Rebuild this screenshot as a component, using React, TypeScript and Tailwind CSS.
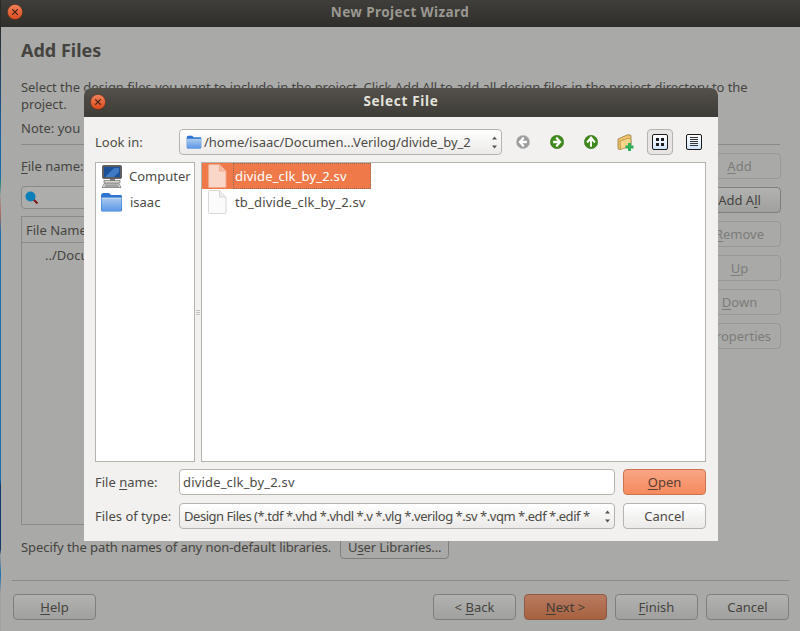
import React from "react";

function U({ children }: { children: React.ReactNode }) {
  return <span className="underline underline-offset-2 decoration-1">{children}</span>;
}

function WBtn({ children, kind = "normal", className = "" }: { children: React.ReactNode; kind?: "normal" | "disabled" | "default"; className?: string }) {
  const k =
    kind === "default"
      ? "border-[#8a5a45] bg-gradient-to-b from-[#b87a60] to-[#a7623f] text-[#3f3a36]"
      : kind === "disabled"
        ? "border-[#989896] bg-[#a9a9a7] text-[#7c7c7a]"
        : "border-[#7f7f7d] bg-gradient-to-b from-[#b2b2b0] to-[#a0a09e] text-[#45443f]";
  return <div className={`h-[26px] w-[83px] flex items-center justify-center rounded-[4px] border ${k} ${className}`}>{children}</div>;
}

function DBtn({ children, primary = false }: { children: React.ReactNode; primary?: boolean }) {
  return (
    <div
      className={`h-[26px] w-[83px] flex items-center justify-center rounded-[4px] border ${
        primary
          ? "border-[#c9744f] bg-gradient-to-b from-[#f9a585] to-[#f58a5e] text-[#5a3d30]"
          : "border-[#b5b3ad] bg-gradient-to-b from-white to-[#ebeae8] text-[#4c4b46]"
      }`}
    >
      {children}
    </div>
  );
}

function CloseBtn({ size = 16 }: { size?: number }) {
  return (
    <svg width={size} height={size} viewBox="0 0 16 16" className="shrink-0">
      <defs>
        <linearGradient id="cb" x1="0" y1="0" x2="0" y2="1">
          <stop offset="0" stopColor="#f2825a" />
          <stop offset="1" stopColor="#d9491c" />
        </linearGradient>
      </defs>
      <circle cx="8" cy="8" r="7.6" fill="url(#cb)" stroke="#4a2a1a" strokeWidth="0.5" />
      <path d="M5.6 5.6l4.8 4.8M10.4 5.6l-4.8 4.8" stroke="#4a2414" strokeWidth="1.3" strokeLinecap="round" />
    </svg>
  );
}

function FolderIcon({ w = 16, h = 14 }: { w?: number; h?: number }) {
  return (
    <svg width={w} height={h} viewBox="0 0 23 20" className="shrink-0">
      <defs>
        <linearGradient id="fd" x1="0" y1="0" x2="0" y2="1">
          <stop offset="0" stopColor="#a9c9f0" />
          <stop offset="1" stopColor="#5b98e6" />
        </linearGradient>
      </defs>
      <path d="M1 3.5 Q1 1 3 1 H9 L11 3 H21 Q22 3 22 4.5 V18 Q22 19.5 20.5 19.5 H2.5 Q1 19.5 1 18Z" fill="#2f74cf" />
      <path d="M1.5 6 H21.5 V17.8 Q21.5 19 20 19 H3 Q1.5 19 1.5 17.8Z" fill="url(#fd)" />
      <path d="M1.5 6 H21.5" stroke="#dbe9fb" strokeWidth="0.8" />
    </svg>
  );
}

function ComputerIcon() {
  return (
    <svg width="22" height="23" viewBox="0 0 22 23" className="shrink-0">
      <rect x="1.5" y="0.5" width="19" height="13" rx="1" fill="#5a5e60" stroke="#2c2e30" strokeWidth="0.6" />
      <rect x="3" y="2" width="16" height="10" fill="#1d4f96" />
      <path d="M5 11 L13 3 H18 V7 L13 12 H5Z" fill="#3f79c4" />
      <rect x="9" y="14" width="5" height="2" fill="#777" />
      <rect x="3" y="15.5" width="16" height="2.5" fill="#d8d8d6" stroke="#444" strokeWidth="0.5" />
      <path d="M1 22.5 L3 18.8 H18 L20 22.5Z" fill="#e6e6e4" stroke="#333" strokeWidth="0.5" />
      <path d="M4 20.2 H17 M3.4 21.3 H18" stroke="#555" strokeWidth="0.6" />
    </svg>
  );
}

function FileIcon({ selected = false }: { selected?: boolean }) {
  return (
    <svg width="20" height="24" viewBox="0 0 20 24" className="shrink-0">
      <path
        d="M1.5 1.5 a1 1 0 0 1 1 -1 H12.5 L19 7 V22.5 a1 1 0 0 1 -1 1 H2.5 a1 1 0 0 1 -1 -1Z"
        fill={selected ? "#f9d6c8" : "#fbfbfb"}
        stroke={selected ? "#f3a78a" : "#d8d8d6"}
      />
      <path d="M12.5 0.5 V7 H19" fill={selected ? "#f5bda6" : "#ececea"} stroke={selected ? "#f3a78a" : "#d8d8d6"} />
    </svg>
  );
}

function ArrowCircle({ dir, color, light }: { dir: "left" | "right" | "up"; color: string; light: string }) {
  const d =
    dir === "left"
      ? "M10 3 L5 8 L10 13 M5.5 8 H14"
      : dir === "right"
        ? "M8 3 L13 8 L8 13 M12.5 8 H4"
        : "M4 8.5 L9 3 L14 8.5 M9 4 V13.5";
  return (
    <svg width="14" height="14" viewBox="0 0 18 16" className="shrink-0 w-[14px] h-[14px]" preserveAspectRatio="none">
      <ellipse cx="9" cy="8" rx="8.6" ry="7.6" fill={color} stroke={light} strokeWidth="0.6" />
      <path d={d} fill="none" stroke="#fff" strokeWidth="2.6" />
    </svg>
  );
}

function NewFolderIcon() {
  return (
    <svg width="17" height="17" viewBox="0 0 17 17" className="shrink-0">
      <path d="M1 5 L10 1 Q13 0.5 14 1.5 V11 L2.5 15.5 Q1 15.5 1 14Z" fill="#f0c469" stroke="#8a6a2c" strokeWidth="0.7" />
      <path d="M3 7 L12 4 L14 6 V12 L3.5 15.5Z" fill="#f7d48a" stroke="#a07c35" strokeWidth="0.6" />
      <rect x="11" y="9" width="3" height="8" fill="#2fae5a" />
      <rect x="8.5" y="11.5" width="8" height="3" fill="#2fae5a" />
    </svg>
  );
}

function ViewIcon({ kind }: { kind: "grid" | "list" }) {
  return (
    <svg width="16" height="16" viewBox="0 0 16 16" className="shrink-0">
      <defs>
        <linearGradient id="vi" x1="0" y1="0" x2="0" y2="1">
          <stop offset="0" stopColor="#ffffff" />
          <stop offset="1" stopColor="#cfe3fb" />
        </linearGradient>
      </defs>
      <rect x="0.5" y="0.5" width="15" height="15" rx="1.5" fill="url(#vi)" stroke="#1a1a1a" />
      {kind === "grid" ? (
        <path d="M4 4h3v3H4zM9 4h3v3H9zM4 9h3v3H4zM9 9h3v3H9z" fill="#1c1c1c" />
      ) : (
        <path d="M4 3.5h8M4 5.5h8M4 7.5h8M4 9.5h8M4 11.5h8" stroke="#333" strokeWidth="1" />
      )}
    </svg>
  );
}

function Spinner() {
  return (
    <svg width="7" height="15" viewBox="0 0 7 15" className="shrink-0">
      <path d="M3.5 1.5 L6 4.5 H1Z M3.5 13.5 L1 10.5 H6Z" fill="#55544f" />
    </svg>
  );
}

function SearchIcon() {
  return (
    <svg width="14" height="14" viewBox="0 0 14 14" className="shrink-0">
      <path d="M7.5 7.5 L12.5 12.5" stroke="#7a1010" strokeWidth="1.8" />
      <circle cx="5.5" cy="5.5" r="5" fill="#0a7fb8" />
    </svg>
  );
}

function Dialog() {
  return (
    <div className="absolute left-[84px] top-[88px] w-[634px] h-[453px] flex flex-col bg-[#f2f1f0] rounded-t-[7px] overflow-hidden text-[#4c4b46]">
      <div className="h-[29px] shrink-0 relative flex items-center justify-center pb-[3px] bg-gradient-to-b from-[#54504a] to-[#3e3c38]">
        <div className="absolute left-[6px] top-[6px]">
          <CloseBtn />
        </div>
        <span className="font-bold text-[#e4e2dc] text-[13.5px] tracking-[0.7px]">Select File</span>
      </div>
      <div className="flex-1 flex flex-col px-[11px] pt-[12px]">
        <div className="flex items-center h-[26px]">
          <span className="w-[84px] shrink-0">Look in:</span>
          <div className="w-[323px] h-[26px] shrink-0 rounded-[4px] border border-[#b5b3ad] bg-gradient-to-b from-white to-[#ebeae8] flex items-center pl-[6px] pr-[3px]">
            <FolderIcon />
            <span className="ml-[2px] flex-1 whitespace-nowrap">/home/isaac/Documen...Verilog/divide_by_2</span>
            <Spinner />
          </div>
          <div className="ml-[14px] flex items-center">
            <ArrowCircle dir="left" color="#9c9c9c" light="#c8c8c8" />
            <div className="ml-[20px]"><ArrowCircle dir="right" color="#3f8a1c" light="#2c6b10" /></div>
            <div className="ml-[20px]"><ArrowCircle dir="up" color="#3f8a1c" light="#2c6b10" /></div>
            <div className="ml-[19px]"><NewFolderIcon /></div>
            <div className="ml-[13px] w-[26px] h-[26px] rounded-[4px] border border-[#b5b3ad] bg-[#e6e5e3] flex items-center justify-center"><ViewIcon kind="grid" /></div>
            <div className="ml-[13px]"><ViewIcon kind="list" /></div>
          </div>
        </div>
        <div className="flex mt-[7px] h-[300px]">
          <div className="w-[100px] shrink-0 bg-white border border-[#b5b3ad] pl-[5px]">
            <div className="flex items-center h-[26px] gap-[6px]">
              <ComputerIcon />
              <span className="whitespace-nowrap">Computer</span>
            </div>
            <div className="flex items-center h-[26px] gap-[6px] ml-[-1px]">
              <FolderIcon w={23} h={20} />
              <span className="ml-px">isaac</span>
            </div>
          </div>
          <div className="w-[6px] shrink-0 flex flex-col items-center justify-center gap-[1px]">
            <div className="w-[4px] h-px bg-[#c4c3c0]" />
            <div className="w-[4px] h-px bg-[#c4c3c0]" />
            <div className="w-[4px] h-px bg-[#c4c3c0]" />
          </div>
          <div className="flex-1 bg-white border border-[#b5b3ad] mr-px tracking-[0.17px]">
            <div className="w-[169px] h-[26px] bg-[#f0794a] flex items-center text-white">
              <div className="w-[31px] flex justify-center shrink-0 ml-[-1px] mr-[1px]"><FileIcon selected /></div>
              <span className="h-full flex-1 flex items-center border border-dotted border-[#8f6a58] pl-[1px] whitespace-nowrap">divide_clk_by_2.sv</span>
            </div>
            <div className="flex items-center h-[26px]">
              <div className="w-[31px] flex justify-center shrink-0 ml-[-1px] mr-[3px]"><FileIcon /></div>
              <span>tb_divide_clk_by_2.sv</span>
            </div>
          </div>
        </div>
        <div className="flex items-center mt-[7px] h-[26px]">
          <span className="w-[84px] shrink-0">File <U>n</U>ame:</span>
          <div className="w-[436px] h-[26px] shrink-0 rounded-[4px] border border-[#b5b3ad] bg-white flex items-center pl-[3px] tracking-[0.17px]">divide_clk_by_2.sv</div>
          <div className="ml-[8px]"><DBtn primary><span><U>O</U>pen</span></DBtn></div>
        </div>
        <div className="flex items-center mt-[8px] h-[26px]">
          <span className="w-[84px] shrink-0">Files of type:</span>
          <div className="w-[436px] h-[26px] shrink-0 rounded-[4px] border border-[#b5b3ad] bg-gradient-to-b from-white to-[#ebeae8] flex items-center pl-[4px] pr-[3px]">
            <span className="flex-1 whitespace-nowrap tracking-[-0.47px]">Design Files (*.tdf *.vhd *.vhdl *.v *.vlg *.verilog *.sv *.vqm *.edf *.edif *</span>
            <Spinner />
          </div>
          <div className="ml-[8px]"><DBtn>Cancel</DBtn></div>
        </div>
      </div>
    </div>
  );
}

export default function App() {
  return (
    <div className="w-[800px] h-[631px] relative flex overflow-hidden font-['Noto_Sans','Open_Sans',sans-serif] text-[13px] leading-[16px] bg-[#a9a9a7]">
      <div className="w-px shrink-0 bg-[linear-gradient(to_bottom,#2b2a27_0%,#2b2a27_4%,#1b5f9f_20%,#1b6fb0_28%,#2a8a7a_29%,#a0a09e_31%,#b06a60_34%,#1b6fb0_37%,#1b6fb0_76%,#123a6a_77%,#123a6a_87%,#a0a09e_88%,#1b6fb0_91%,#a0a09e_94%)]" />
      <div className="w-[799px] min-w-0 flex flex-col text-[#45443f]">
        <div className="h-[27px] shrink-0 relative flex items-center justify-center pb-[3px] bg-gradient-to-b from-[#403e3a] to-[#2f2e2a]">
          <div className="absolute left-[6px] top-[4px]">
            <CloseBtn />
          </div>
          <span className="font-bold text-[#9a9890] text-[13.5px] tracking-[0.42px] ml-[-1px]">New Project Wizard</span>
        </div>
        <div className="flex-1 min-h-0 flex flex-col pl-[20px] pr-[20px]">
          <div className="mt-[12px] h-[22px] font-bold text-[18px] leading-[22px]">Add Files</div>
          <p className="mt-[18px] w-[740px] leading-[17px] tracking-[-0.06px]">Select the design files you want to include in the project. Click Add All to add all design files in the project directory to the project.</p>
          <p className="mt-[7px]">Note: you can always add design files to the project later.</p>
          <div className="mt-[8px] h-px bg-[#8a8a88]" />
          <div className="mt-[8px] flex h-[373px]">
            <div className="flex-1 flex flex-col min-w-0">
              <div className="h-[26px] flex items-center"><span><U>F</U>ile name:</span></div>
              <div className="mt-[7px] h-[23px] w-[660px] rounded-[4px] border border-[#8a8a88] bg-[#adadab] flex items-center pl-[3px]">
                <SearchIcon />
              </div>
              <div className="mt-[7px] w-[665px] h-[309px] border border-[#8a8a88] flex flex-col">
                <div className="h-[26px] border-b border-[#8a8a88] flex items-center pl-[4px] pt-px">File Name</div>
                <div className="h-[24px] flex items-center pl-[23px]">../Documents/Verilog/divide_by_2/divide_clk_by_2.sv</div>
              </div>
            </div>
            <div className="w-[83px] shrink-0 flex flex-col gap-[8px] mr-[-1px]">
              <WBtn kind="disabled"><span><U>A</U>dd</span></WBtn>
              <WBtn><span>Add A<U>l</U>l</span></WBtn>
              <WBtn kind="disabled"><span><U>R</U>emove</span></WBtn>
              <WBtn kind="disabled"><span><U>U</U>p</span></WBtn>
              <WBtn kind="disabled"><span><U>D</U>own</span></WBtn>
              <WBtn kind="disabled"><span>Properties</span></WBtn>
            </div>
          </div>
          <div className="flex items-center mt-[8px] h-[26px]">
            <span className="tracking-[-0.08px]">Specify the path names of any non-default libraries.</span>
            <div className="ml-[9px] h-[24px] w-[109px] rounded-[4px] border border-[#7f7f7d] bg-[#a9a9a7] flex items-center justify-center">
              <span className="tracking-[-0.1px]">U<U>s</U>er Libraries...</span>
            </div>
          </div>
        </div>
        <div className="mx-[11px] h-px bg-[#8a8a88]" />
        <div className="flex items-center pl-[12px] pr-[11px] pt-[13px] pb-[11px]">
          <WBtn><span><U>H</U>elp</span></WBtn>
          <div className="flex-1" />
          <div className="flex gap-[8px]">
            <WBtn><span>&lt; <U>B</U>ack</span></WBtn>
            <WBtn kind="default"><span><U>N</U>ext &gt;</span></WBtn>
            <WBtn><span><U>F</U>inish</span></WBtn>
            <WBtn>Cancel</WBtn>
          </div>
        </div>
      </div>
      <Dialog />
    </div>
  );
}
